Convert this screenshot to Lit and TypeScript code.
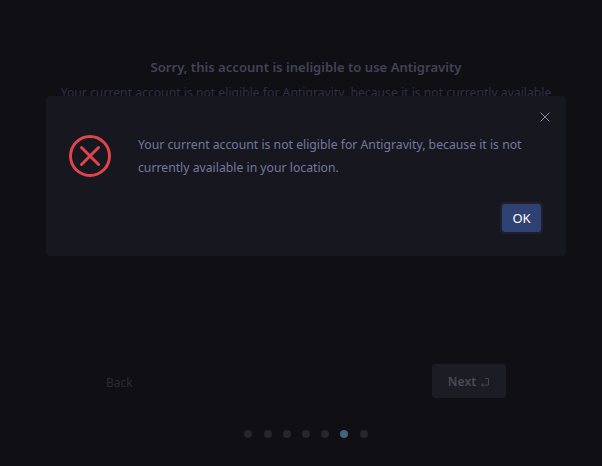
import { LitElement, html, css } from "lit";
import { customElement } from "lit/decorators.js";

@customElement("app-root")
export class AppRoot extends LitElement {
  static styles = css`
    :host {
      display: block;
      width: 602px;
      height: 466px;
      position: relative;
      overflow: hidden;
      background: #0f0f14;
      font-family: "Noto Sans", sans-serif;
    }
    .page {
      display: flex;
      flex-direction: column;
      align-items: center;
      height: 466px;
      box-sizing: border-box;
      padding: 57px 0 0 10px;
    }
    .title {
      font-size: 13.1px;
      font-weight: 600;
      line-height: 20px;
      color: #414358;
      margin: 0;
    }
    .sub {
      font-size: 12.2px;
      line-height: 20px;
      color: #2e2f40;
      margin: 6px 0 0;
      white-space: nowrap;
    }
    .nav {
      width: 400px;
      margin-top: 261px;
      display: flex;
      justify-content: space-between;
      align-items: center;
    }
    .back {
      font-size: 12px;
      line-height: 18px;
      color: #2b2b33;
      padding-top: 4px;
    }
    .next {
      width: 74px;
      height: 34px;
      border-radius: 3px;
      background: #1c1c25;
      color: #4b4b52;
      font-size: 12.2px;
      font-weight: 600;
      display: flex;
      align-items: center;
      justify-content: center;
      gap: 4px;
    }
    .next svg {
      width: 10px;
      height: 10px;
      margin-top: 1px;
    }
    .dots {
      display: flex;
      margin-top: 32px;
      align-items: center;
    }
    .dot {
      width: 8px;
      height: 8px;
      border-radius: 50%;
      background: #26262c;
      margin-right: 11px;
    }
    .dot:first-child {
      margin-right: 12px;
    }
    .dot.active {
      background: #41657f;
      margin-right: 12px;
    }
    .dot:last-child {
      margin-right: 0;
    }
    .dialog {
      position: absolute;
      left: 46px;
      top: 96px;
      width: 520px;
      height: 160px;
      box-sizing: border-box;
      background: #16171f;
      border-radius: 3px;
      color: #74789e;
    }
    .close {
      position: absolute;
      left: 494px;
      top: 16px;
      width: 10px;
      height: 10px;
      display: block;
    }
    .body {
      display: flex;
      padding: 37px 40px 0 22px;
      gap: 26px;
    }
    .icon {
      flex: none;
      width: 44px;
      height: 44px;
      margin-top: 1px;
    }
    .msg {
      margin: 0;
      font-size: 12.23px;
      line-height: 22.5px;
      padding-top: 1px;
    }
    .actions {
      display: flex;
      justify-content: flex-end;
      padding: 25px 25px 0 0;
    }
    .ok {
      width: 39px;
      height: 28px;
      box-sizing: border-box;
      border: 0;
      margin: 0;
      padding: 0;
      border-radius: 2px;
      background: #2f4073;
      outline: 2px solid #1f202b;
      outline-offset: 0;
      color: #fff;
      font: 13px "Noto Sans", sans-serif;
    }
  `;

  render() {
    return html`
      <div class="page">
        <h1 class="title">Sorry, this account is ineligible to use Antigravity</h1>
        <p class="sub">Your current account is not eligible for Antigravity, because it is not currently available</p>
        <div class="nav">
          <span class="back">Back</span>
          <div class="next">Next <svg viewBox="0 0 10 10" fill="none" stroke="#45454c" stroke-width="1"><path d="M5 1.500h3.500v6.500h-7M3.500 6l-2 2 2 2"/></svg></div>
        </div>
        <div class="dots">
          <span class="dot"></span><span class="dot"></span><span class="dot"></span><span class="dot"></span><span class="dot"></span><span class="dot active"></span><span class="dot"></span>
        </div>
      </div>
      <div class="dialog">
        <svg class="close" viewBox="0 0 10 10" fill="none" stroke="#85879c" stroke-width="1"><path d="M.5.5l9 9M9.500.5l-9 9"/></svg>
        <div class="body">
          <svg class="icon" viewBox="0 0 44 44" fill="none" stroke="#e0454c" stroke-width="3"><circle cx="22" cy="22" r="19.500"/><path d="M13.500 13.500l17 17M30.500 13.500l-17 17" stroke-linecap="round"/></svg>
          <p class="msg">Your current account is not eligible for Antigravity, because it is not currently available in your location.</p>
        </div>
        <div class="actions"><button class="ok">OK</button></div>
      </div>
    `;
  }
}
